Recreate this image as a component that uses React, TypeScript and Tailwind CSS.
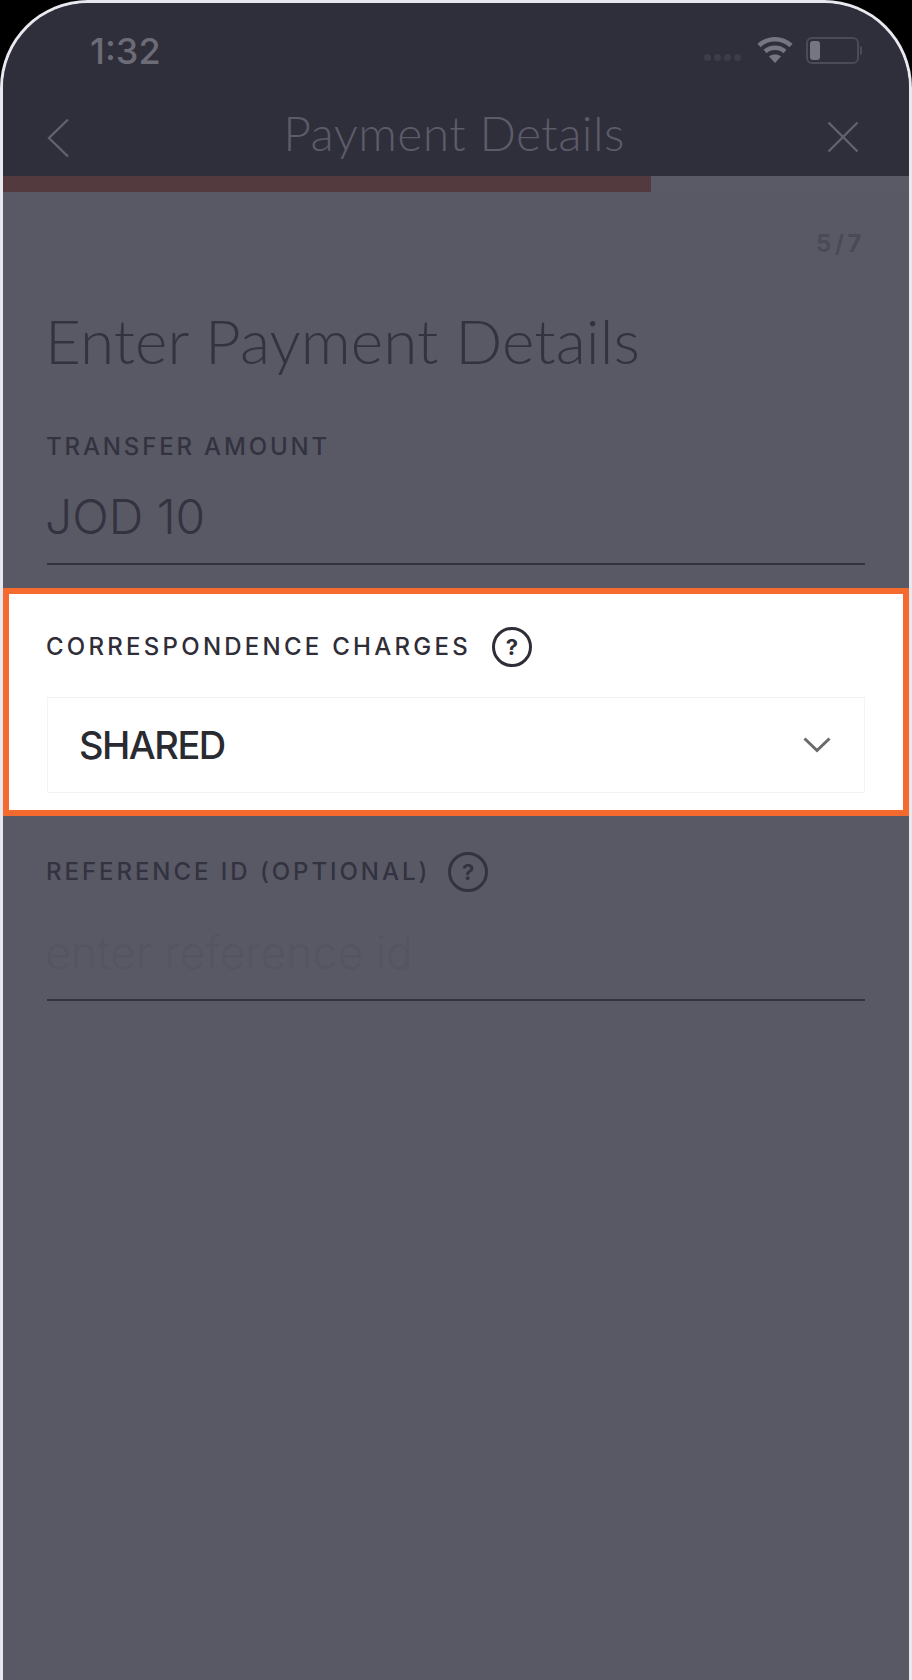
function HelpIcon({ tone }: { tone: string }) {
  return (
    <span
      className={`flex h-[40px] w-[40px] items-center justify-center rounded-full border-[3px] text-[22px] leading-none font-bold ${tone}`}
    >
      ?
    </span>
  )
}

function StatusBar() {
  return (
    <div className="flex h-[97px] items-start justify-between pl-[87px] pr-[47px] pt-[26px]">
      <span className="text-[36px] leading-[44px] font-medium text-[#6c6b76] font-['Inter',sans-serif]">1:32</span>
      <div className="flex items-center pt-[8px]">
        <div className="mt-[14px] flex gap-[3px]">
          <span className="h-[7px] w-[7px] rounded-full bg-[#3d3c48]" />
          <span className="h-[7px] w-[7px] rounded-full bg-[#3d3c48]" />
          <span className="h-[7px] w-[7px] rounded-full bg-[#3d3c48]" />
          <span className="h-[7px] w-[7px] rounded-full bg-[#3d3c48]" />
        </div>
        <svg width="36" height="28" viewBox="0 0 36 28" fill="none" stroke="#777680" strokeWidth="4.5" className="ml-[16px] mr-[13px] -mt-[1px]">
          <path d="M2 9.5C11 1 25 1 34 9.5" />
          <path d="M8 15.5C13.5 10.5 22.5 10.5 28 15.5" />
          <path d="M18 27l-6-6.5c3.5-2.6 8.5-2.6 12 0z" fill="#777680" stroke="none" />
        </svg>
        <div className="flex items-center gap-[1px]">
          <div className="flex h-[27px] w-[53px] items-center rounded-[6px] border-2 border-[#4b4a56] px-[2px]">
            <span className="h-[19px] w-[10px] rounded-[3px] bg-[#777680]" />
          </div>
          <span className="h-[9px] w-[2px] rounded-r bg-[#4b4a56]" />
        </div>
      </div>
    </div>
  )
}

export default function App() {
  return (
    <div className="h-[1680px] w-[912px] overflow-hidden bg-black font-['Inter',sans-serif]">
      <div className="h-full overflow-hidden rounded-t-[88px] border-x-[3px] border-t-[3px] border-[#e8e8ef] bg-[#595965]">
        <div className="bg-[#2f2e3b]">
          <StatusBar />
          <div className="flex h-[76px] items-start justify-between pl-[44px] pr-[50px]">
            <svg width="22" height="40" viewBox="0 0 22 40" fill="none" stroke="#62616d" strokeWidth="2.4" className="mt-[18px]">
              <path d="M21 1.5L2 20l19 18.5" />
            </svg>
            <span className="ml-[12px] pt-[5px] text-[48px] leading-[56px] font-light text-[#5c5b68] font-['Lato',sans-serif] tracking-[0.4px]">
              Payment Details
            </span>
            <svg width="32" height="32" viewBox="0 0 32 32" fill="none" stroke="#62616d" strokeWidth="2.4" className="mt-[21px]">
              <path d="M1.5 1.5l29 29M30.5 1.5l-29 29" />
            </svg>
          </div>
        </div>

        <div className="h-[16px] bg-[#5a5a66]">
          <div className="h-full w-[648px] bg-[#523a3e]" />
        </div>

        <div className="flex justify-end pr-[44px] pt-[39px]">
          <span className="text-[24px] leading-[26px] font-bold tracking-[3.5px] text-[#4a4a57]">5/7</span>
        </div>

        <div className="px-[44px]">
          <h1 className="-ml-[2px] mt-[47px] text-[62px] leading-[72px] font-light tracking-[0.1px] text-[#333240] font-['Lato',sans-serif]">
            Enter Payment Details
          </h1>
          <div className="-ml-px mt-[58px] text-[24px] leading-[26px] font-medium tracking-[2.85px] text-[#333240]">TRANSFER AMOUNT</div>
          <div className="mt-[32px] border-b-2 border-[#333240] pb-[21px] text-[48px] leading-[50px] font-light text-[#333240]">
            <span className="-ml-[2px] block">JOD 10</span>
          </div>
        </div>

        <div className="mt-[23px] border-[6px] border-[#f46a2f] bg-white pl-[38px] pr-[38px] pt-[33px] pb-[17px]">
          <div className="-ml-px flex items-center gap-[21px]">
            <span className="text-[24px] leading-[26px] font-medium tracking-[3.25px] text-[#2f2e38]">CORRESPONDENCE CHARGES</span>
            <HelpIcon tone="border-[#2f2e38] text-[#2f2e38]" />
          </div>
          <div className="mt-[30px] flex h-[96px] items-center justify-between border border-[#f3f3f3] pl-[31px] pr-[20px]">
            <span className="text-[38px] leading-[44px] font-medium tracking-[-1.5px] text-[#2a2b30]">SHARED</span>
            <svg width="28" height="16" viewBox="0 0 28 16" fill="none" stroke="#6a6a6e" strokeWidth="3" className="mr-[13px]">
              <path d="M1.5 1.5L14 13.5 26.500 1.500" />
            </svg>
          </div>
        </div>

        <div className="px-[44px]">
          <div className="-ml-px mt-[36px] flex items-center gap-[18px]">
            <span className="text-[24px] leading-[26px] font-medium tracking-[2.95px] text-[#333240]">REFERENCE ID (OPTIONAL)</span>
            <HelpIcon tone="border-[#333240] text-[#333240]" />
          </div>
          <div className="mt-[36px] border-b-2 border-[#333240] pb-[21px] text-[44.500px] leading-[50px] font-light text-[#555561]">
            <span className="-ml-[2px] block">enter reference id</span>
          </div>
        </div>
      </div>
    </div>
  )
}
